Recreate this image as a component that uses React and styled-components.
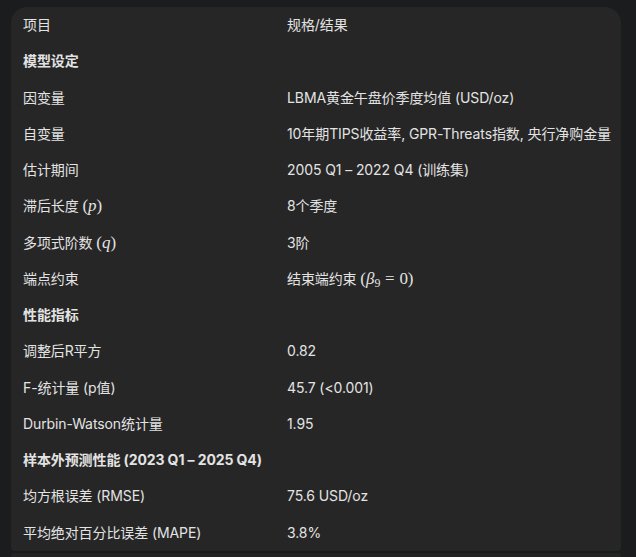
import React from "react";
import styled, { createGlobalStyle } from "styled-components";

const Global = createGlobalStyle`
  html, body { margin: 0; padding: 0; background: #1b1c1d; }
  body { font-family: Inter, "Noto Sans CJK SC", sans-serif; }
`;

const Page = styled.div`
  padding: 7px 15px 0 11px;
  height: 557px;
  box-sizing: border-box;
  overflow: hidden;
`;

const Card = styled.div`
  width: 610px;
  background: #262626;
  border-radius: 16px 16px 4px 4px;
  overflow: hidden;
`;

const Table = styled.table`
  width: 100%;
  table-layout: fixed;
  border-collapse: collapse;
  color: #e3e3e3;
  font-size: 14px;
  line-height: 20.27px;
  letter-spacing: -0.1px;
`;

const Col = styled.col`
  width: ${(p) => p.$w};
`;

const Cell = styled.td`
  padding: 8px 12px;
  text-align: left;
  vertical-align: middle;
  white-space: nowrap;
  font-weight: ${(p) => (p.$bold ? 700 : 400)};
`;

const Math = styled.span`
  font-family: "Liberation Serif", "DejaVu Serif", serif;
  font-size: 1.21em;
  line-height: 1;
  letter-spacing: 0;
`;

const MathVar = styled.i`
  font-style: italic;
`;

const Rel = styled.span`
  padding: 0 0.28em;
`;

const Sub = styled.sub`
  font-size: 0.7em;
  vertical-align: -0.25em;
  line-height: 0;
`;

const Scroll = styled.div`
  margin-top: 2px;
  width: 610px;
  height: 6px;
  background: #242424;
  border-radius: 3px;
`;

const rows = [
  { a: "项目", b: "规格/结果" },
  { a: "模型设定", bold: true },
  { a: "因变量", b: "LBMA黄金午盘价季度均值 (USD/oz)" },
  { a: "自变量", b: "10年期TIPS收益率, GPR-Threats指数, 央行净购金量" },
  { a: "估计期间", b: "2005 Q1 – 2022 Q4 (训练集)" },
  {
    a: (
      <>
        滞后长度 <Math>(<MathVar>p</MathVar>)</Math>
      </>
    ),
    b: "8个季度",
  },
  {
    a: (
      <>
        多项式阶数 <Math>(<MathVar>q</MathVar>)</Math>
      </>
    ),
    b: "3阶",
  },
  {
    a: "端点约束",
    b: (
      <>
        结束端约束{" "}
        <Math>
          (<MathVar>β</MathVar>
          <Sub>9</Sub>
          <Rel>=</Rel>0)
        </Math>
      </>
    ),
  },
  { a: "性能指标", bold: true },
  { a: "调整后R平方", b: "0.82" },
  { a: "F-统计量 (p值)", b: "45.7 (<0.001)" },
  { a: "Durbin-Watson统计量", b: "1.95" },
  { a: "样本外预测性能 (2023 Q1 – 2025 Q4)", bold: true },
  { a: "均方根误差 (RMSE)", b: "75.6 USD/oz" },
  { a: "平均绝对百分比误差 (MAPE)", b: "3.8%" },
];

export default function App() {
  return (
    <>
      <Global />
      <Page>
        <Card>
          <Table>
            <colgroup>
              <Col $w="264px" />
              <Col $w="auto" />
            </colgroup>
            <tbody>
              {rows.map((r, i) => (
                <tr key={i}>
                  <Cell $bold={r.bold}>{r.a}</Cell>
                  <Cell>{r.b || ""}</Cell>
                </tr>
              ))}
            </tbody>
          </Table>
        </Card>
        <Scroll />
      </Page>
    </>
  );
}
